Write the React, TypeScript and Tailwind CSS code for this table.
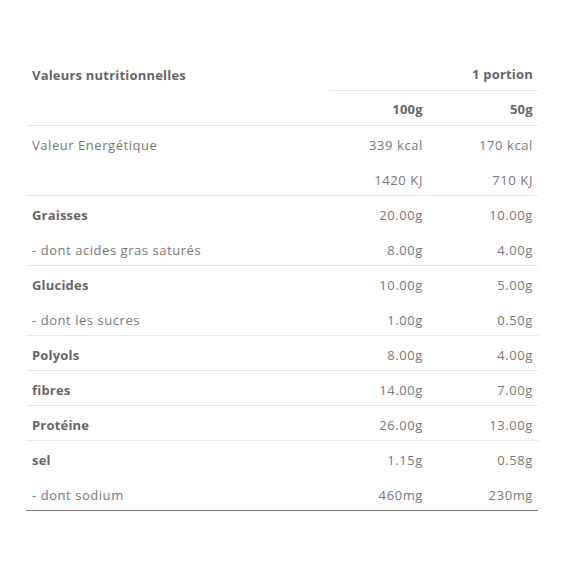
import React from "react";

type Row = { label: string; bold?: boolean; a: string; b: string };

const groups: Row[][] = [
  [
    { label: "Valeur Energétique", a: "339 kcal", b: "170 kcal" },
    { label: "", a: "1420 KJ", b: "710 KJ" },
  ],
  [
    { label: "Graisses", bold: true, a: "20.00g", b: "10.00g" },
    { label: "- dont acides gras saturés", a: "8.00g", b: "4.00g" },
  ],
  [
    { label: "Glucides", bold: true, a: "10.00g", b: "5.00g" },
    { label: "- dont les sucres", a: "1.00g", b: "0.50g" },
  ],
  [{ label: "Polyols", bold: true, a: "8.00g", b: "4.00g" }],
  [{ label: "fibres", bold: true, a: "14.00g", b: "7.00g" }],
  [{ label: "Protéine", bold: true, a: "26.00g", b: "13.00g" }],
  [
    { label: "sel", bold: true, a: "1.15g", b: "0.58g" },
    { label: "- dont sodium", a: "460mg", b: "230mg" },
  ],
];

export default function App() {
  return (
    <div
      className="w-[564px] h-[564px] bg-white pt-[56px] pl-[26px]"
      style={{ fontFamily: "'Open Sans', 'DejaVu Sans', sans-serif" }}
    >
      <div className="w-[512px] text-[13px]">
        <div className="grid grid-cols-[303px_209px] h-[35px]">
          <div className="flex items-center pl-[6px] pt-[4px] font-bold text-[#666] tracking-[0.2px]">
            Valeurs nutritionnelles
          </div>
          <div className="flex items-center justify-end pr-[5px] pt-[3px] font-bold text-[#666] tracking-[0.2px] border-b border-[#e6e6e6]">
            1 portion
          </div>
        </div>
        <div className="grid grid-cols-[303px_99px_110px] h-[35px] border-b border-[#e6e6e6]">
          <div />
          <div className="flex items-center justify-end pr-[5px] pt-[4px] font-bold text-[#666] tracking-[0.3px]">
            100g
          </div>
          <div className="flex items-center justify-end pr-[5px] pt-[4px] font-bold text-[#666] tracking-[0.3px]">
            50g
          </div>
        </div>
        {groups.map((g, gi) => (
          <div
            key={gi}
            className={
              gi === groups.length - 1
                ? "border-b border-[#7a7a7a]"
                : "border-b border-[#e6e6e6]"
            }
          >
            {g.map((r, ri) => (
              <div
                key={ri}
                className={
                  ri === g.length - 1
                    ? "grid grid-cols-[303px_99px_110px] h-[34px]"
                    : "grid grid-cols-[303px_99px_110px] h-[35px]"
                }
              >
                <div
                  className={
                    r.bold
                      ? "flex items-center pl-[6px] pt-[5px] font-bold text-[#666] tracking-[0.2px]"
                      : "flex items-center pl-[6px] pt-[5px] text-[#777] tracking-[0.55px]"
                  }
                >
                  {r.label}
                </div>
                <div className="flex items-center justify-end pr-[5px] pt-[5px] text-[#777] tracking-[0.6px]">
                  {r.a}
                </div>
                <div className="flex items-center justify-end pr-[5px] pt-[5px] text-[#777] tracking-[0.6px]">
                  {r.b}
                </div>
              </div>
            ))}
          </div>
        ))}
      </div>
    </div>
  );
}
